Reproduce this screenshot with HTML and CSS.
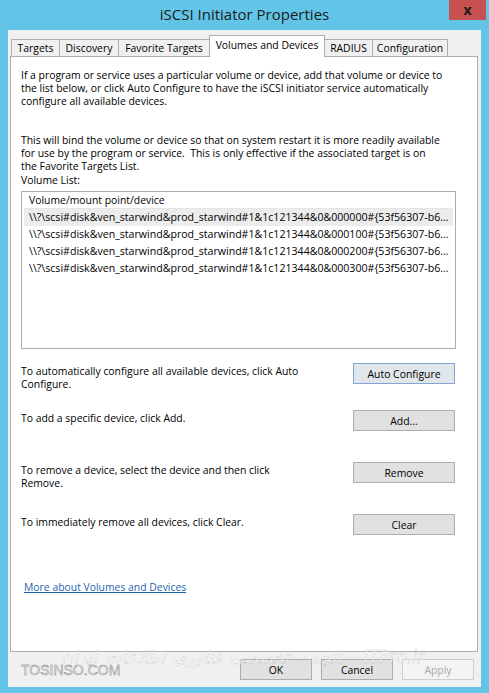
FILE: index.html
```html
<!DOCTYPE html>
<html lang="en">
<head>
    <meta charset="UTF-8">
    <meta name="viewport" content="width=device-width, initial-scale=1.0">
    <title>iSCSI Initiator Properties</title>
    <link rel="stylesheet" href="styles.css">
</head>
<body>
    <div class="window">
        <div class="titlebar">
            <span></span>
            <span class="title">iSCSI Initiator Properties</span>
            <button class="close">x</button>
        </div>

        <div class="client">
            <div class="tabs">
                <span class="tab w-targets">Targets</span>
                <span class="tab w-discovery">Discovery</span>
                <span class="tab w-favorite">Favorite Targets</span>
                <span class="tab active w-volumes">Volumes and Devices</span>
                <span class="tab w-radius">RADIUS</span>
                <span class="tab w-config">Configuration</span>
            </div>

            <div class="panel">
                <p class="intro">If a program or service uses a particular volume or device, add that volume or device to<br>the list below, or click Auto Configure to have the iSCSI initiator service automatically<br>configure all available devices.</p>
                <p class="intro second">This will bind the volume or device so that on system restart it is more readily available<br>for use by the program or service.&nbsp; This is only effective if the associated target is on<br>the Favorite Targets List.</p>

                <div class="list-label">Volume List:</div>
                <div class="listbox">
                    <div class="list-header">Volume/mount point/device</div>
                    <div class="list-row selected">\\?\scsi#disk&amp;ven_starwind&amp;prod_starwind#1&amp;1c121344&amp;0&amp;000000#{53f56307-b6...</div>
                    <div class="list-row">\\?\scsi#disk&amp;ven_starwind&amp;prod_starwind#1&amp;1c121344&amp;0&amp;000100#{53f56307-b6...</div>
                    <div class="list-row">\\?\scsi#disk&amp;ven_starwind&amp;prod_starwind#1&amp;1c121344&amp;0&amp;000200#{53f56307-b6...</div>
                    <div class="list-row">\\?\scsi#disk&amp;ven_starwind&amp;prod_starwind#1&amp;1c121344&amp;0&amp;000300#{53f56307-b6...</div>
                </div>

                <div class="actions">
                    <div class="action row-auto">
                        <span class="action-text">To automatically configure all available devices, click Auto<br>Configure.</span>
                        <button class="btn default">Auto Configure</button>
                    </div>
                    <div class="action row-add">
                        <span class="action-text">To add a specific device, click Add.</span>
                        <button class="btn">Add...</button>
                    </div>
                    <div class="action row-remove">
                        <span class="action-text">To remove a device, select the device and then click<br>Remove.</span>
                        <button class="btn">Remove</button>
                    </div>
                    <div class="action">
                        <span class="action-text">To immediately remove all devices, click Clear.</span>
                        <button class="btn">Clear</button>
                    </div>
                </div>

                <a class="more" href="#">More about Volumes and Devices</a>
            </div>

            <div class="footer">
                <span class="mark-site">TOSINSO.COM</span>
                <span class="mark-fa" dir="rtl">ITPro.ir - انجمن تخصصی فناوری اطلاعات ایران</span>
                <button class="btn small">OK</button>
                <button class="btn small">Cancel</button>
                <button class="btn small" disabled>Apply</button>
            </div>
        </div>
    </div>
</body>
</html>
```

FILE: styles.css
```css
body {
    margin: 0;
    font-family: "Open Sans", Arial, sans-serif;
    font-size: 10.4px;
    color: #000;
}
.window {
    width: 489px;
    height: 693px;
    background-color: #62c5e8;
    display: flex;
    flex-direction: column;
    box-sizing: border-box;
}
.titlebar {
    height: 30px;
    display: grid;
    grid-template-columns: 1fr auto 1fr;
    align-items: start;
}
.title {
    font-size: 15px;
    line-height: 28px;
    color: #1b1b1b;
}
.close {
    justify-self: end;
    margin-right: 3px;
    width: 37px;
    height: 20px;
    border: none;
    padding: 0;
    background-color: #c75050;
    color: #1e1e1e;
    font-family: "DejaVu Sans", Arial, sans-serif;
    font-weight: bold;
    font-size: 14px;
    line-height: 17px;
}
.client {
    margin: 0 8px 6px;
    height: 657px;
    background-color: #f0f0f0;
    display: flex;
    flex-direction: column;
}
.tabs {
    display: flex;
    align-items: flex-end;
    padding: 10px 0 0 3px;
    height: 16px;
}
.tab {
    box-sizing: border-box;
    height: 17px;
    border: 1px solid #adadad;
    border-bottom: none;
    border-right: none;
    background-color: #f0f0f0;
    text-align: center;
    line-height: 16px;
    white-space: nowrap;
}
.tab.w-config {
    border-right: 1px solid #adadad;
}
.tab.active {
    position: relative;
    z-index: 1;
    height: 22px;
    margin-bottom: -1px;
    border-right: 1px solid #adadad;
    background-color: #fff;
    line-height: 18px;
}
.tab.active + .tab {
    border-left: none;
}
.w-targets { width: 48px; }
.w-discovery { width: 59px; }
.w-favorite { width: 91px; }
.w-volumes { width: 116px; }
.w-radius { width: 47px; }
.w-config { width: 76px; }
.panel {
    margin-left: 2px;
    width: 468px;
    height: 596px;
    box-sizing: border-box;
    border: 1px solid #adadad;
    background-color: #fff;
    padding: 12px 10px 0;
}
.intro {
    margin: 0;
    line-height: 13px;
    white-space: nowrap;
}
.intro.second {
    margin-top: 26px;
}
.list-label {
    margin-top: 1px;
    line-height: 13px;
}
.listbox {
    margin-top: 4px;
    width: 435px;
    height: 158px;
    box-sizing: border-box;
    border: 1px solid #adadad;
    padding: 0 2px;
}
.list-header {
    height: 17px;
    line-height: 17px;
    padding-left: 5px;
    border-bottom: 1px solid #e5e5e5;
    box-sizing: border-box;
}
.list-row {
    height: 17px;
    line-height: 17px;
    padding-left: 5px;
    font-size: 10.6px;
    white-space: nowrap;
    overflow: hidden;
    text-overflow: ellipsis;
}
.list-row.selected {
    background-color: #ececec;
}
.actions {
    margin-top: 14px;
    padding-right: 12px;
}
.action {
    display: flex;
    justify-content: space-between;
    align-items: flex-start;
    height: 21px;
}
.row-auto { height: 47px; }
.row-add,
.row-remove { height: 52px; }
.action-text {
    padding-top: 2px;
    line-height: 13px;
    white-space: nowrap;
}
.btn {
    width: 102px;
    height: 21px;
    padding: 0;
    border: 1px solid #adadad;
    background-color: #e1e1e1;
    font-family: "Open Sans", Arial, sans-serif;
    font-size: 10.4px;
    color: #000;
}
.btn.default {
    border-color: #7ea6d0;
    background-color: #e1e6ea;
}
.btn.small {
    width: 72px;
}
.btn:disabled {
    border-color: #cfcfcf;
    background-color: #f4f4f4;
    color: #a8a8a8;
}
.more {
    display: inline-block;
    margin-top: 46px;
    margin-left: 3px;
    line-height: 13px;
    color: #1d63ae;
}
.footer {
    position: relative;
    display: flex;
    justify-content: flex-end;
    gap: 9px;
    padding: 7px 7px 0 0;
}
.mark-site {
    position: absolute;
    left: 13px;
    top: 10px;
    font-family: "Liberation Sans", Arial, sans-serif;
    font-size: 14px;
    color: #ececec;
    -webkit-text-stroke: 0.35px #666;
}
.mark-fa {
    position: absolute;
    left: 38px;
    top: -5px;
    width: 378px;
    font-family: "DejaVu Sans", sans-serif;
    font-size: 17px;
    font-style: italic;
    word-spacing: 3px;
    white-space: nowrap;
    color: rgba(255, 255, 255, 0.6);
    -webkit-text-stroke: 0.3px rgba(130, 130, 130, 0.5);
}
```
